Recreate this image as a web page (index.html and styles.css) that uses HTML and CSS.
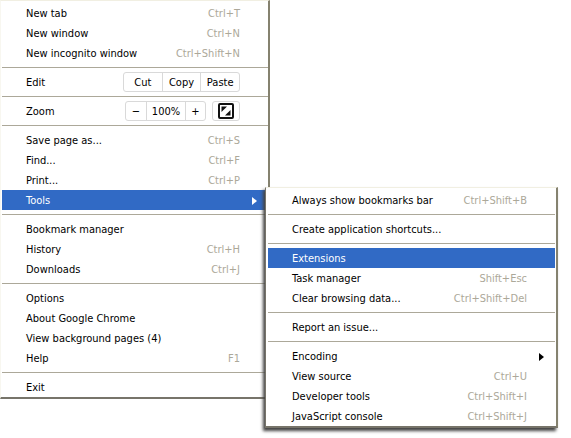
FILE: index.html
```html
<!DOCTYPE html>
<html lang="en">
<head>
<meta charset="utf-8">
<title>Chrome menu</title>
<link rel="stylesheet" href="styles.css">
</head>
<body>
<nav class="menu main-menu" aria-label="Main menu">
  <button class="item" type="button">New tab <kbd>Ctrl+T</kbd></button>
  <button class="item" type="button">New window <kbd>Ctrl+N</kbd></button>
  <button class="item" type="button">New incognito window <kbd>Ctrl+Shift+N</kbd></button>
  <hr>
  <div class="item">
    <span>Edit</span>
    <div class="group edit-group">
      <button type="button">Cut</button>
      <button type="button">Copy</button>
      <button type="button">Paste</button>
    </div>
  </div>
  <hr>
  <div class="item">
    <span>Zoom</span>
    <div class="zoom-tools">
      <div class="group zoom-group">
        <button type="button" aria-label="Zoom out">−</button>
        <output>100%</output>
        <button type="button" aria-label="Zoom in">+</button>
      </div>
      <div class="group full-group">
        <button type="button" aria-label="Full screen">
          <svg width="16" height="16" viewBox="0 0 16 16" aria-hidden="true">
            <rect x="1" y="1" width="14" height="14" rx="1" fill="#fff" stroke="#111" stroke-width="2"/>
            <path d="M3.5 3.5H9L7.300 5.200 5.200 7.300 3.500 9ZM12.500 12.500H7L8.700 10.800 10.800 8.700 12.500 7Z" fill="#111"/>
          </svg>
        </button>
      </div>
    </div>
  </div>
  <hr>
  <button class="item" type="button">Save page as... <kbd>Ctrl+S</kbd></button>
  <button class="item" type="button">Find... <kbd>Ctrl+F</kbd></button>
  <button class="item" type="button">Print... <kbd>Ctrl+P</kbd></button>
  <div class="parent">
    <button class="item selected" type="button" aria-haspopup="true" aria-expanded="true">Tools
      <svg class="arrow" width="5" height="8" viewBox="0 0 5 8" aria-hidden="true"><path d="M0 0 5 4 0 8Z" fill="currentColor"/></svg>
    </button>
    <div class="menu submenu">
      <button class="item" type="button">Always show bookmarks bar <kbd>Ctrl+Shift+B</kbd></button>
      <hr>
      <button class="item" type="button">Create application shortcuts...</button>
      <hr>
      <button class="item selected" type="button">Extensions</button>
      <button class="item" type="button">Task manager <kbd>Shift+Esc</kbd></button>
      <button class="item" type="button">Clear browsing data... <kbd>Ctrl+Shift+Del</kbd></button>
      <hr>
      <button class="item" type="button">Report an issue...</button>
      <hr>
      <button class="item" type="button" aria-haspopup="true">Encoding
        <svg class="arrow" width="5" height="8" viewBox="0 0 5 8" aria-hidden="true"><path d="M0 0 5 4 0 8Z" fill="currentColor"/></svg>
      </button>
      <button class="item" type="button">View source <kbd>Ctrl+U</kbd></button>
      <button class="item" type="button">Developer tools <kbd>Ctrl+Shift+I</kbd></button>
      <button class="item" type="button">JavaScript console <kbd>Ctrl+Shift+J</kbd></button>
    </div>
  </div>
  <hr>
  <button class="item" type="button">Bookmark manager</button>
  <button class="item" type="button">History <kbd>Ctrl+H</kbd></button>
  <button class="item" type="button">Downloads <kbd>Ctrl+J</kbd></button>
  <hr>
  <button class="item" type="button">Options</button>
  <button class="item" type="button">About Google Chrome</button>
  <button class="item" type="button">View background pages (4)</button>
  <button class="item" type="button">Help <kbd>F1</kbd></button>
  <hr>
  <button class="item" type="button">Exit</button>
</nav>
</body>
</html>
```
FILE: styles.css
```css
* {
  box-sizing: border-box;
}

body {
  min-height: 100vh;
  margin: 0;
  background: #fff;
  color: #000;
  font: 11px/18px Tahoma, "DejaVu Sans Condensed", "DejaVu Sans", sans-serif;
}

button,
kbd {
  font: inherit;
}

button {
  border: 0;
  padding: 0;
  background: none;
  color: inherit;
}

.menu {
  display: flex;
  flex-direction: column;
  background: #fff;
  border: solid;
  border-width: 1px 2px 2px 1px;
  border-color: #f1efe2 #85826f #77746a #f8f7f0;
}

.main-menu {
  width: 270px;
  padding: 2px 0 0 1px;
}

.item {
  display: flex;
  align-items: center;
  justify-content: space-between;
  width: 100%;
  height: 20px;
  padding: 2px 28px 0 24px;
  text-align: left;
  white-space: nowrap;
}

.item kbd {
  color: #aca899;
}

.selected {
  background: #316ac5;
  color: #fff;
}

.arrow {
  margin-right: -17px;
}

hr {
  width: 100%;
  height: 1px;
  margin: 4px 0;
  border: 0;
  background: #aca899;
}

.parent {
  position: relative;
}

.submenu {
  position: absolute;
  top: -3px;
  left: calc(100% - 3px);
  z-index: 1;
  width: 293px;
  padding: 2px 1px 0 2px;
  border-left-color: #77746a;
  box-shadow: -2px 3px 3px #444;
}

.group {
  display: flex;
  height: 20px;
  margin-top: -2px;
  border: 1px solid #d9d9d9;
  border-radius: 3px;
  line-height: 16px;
  text-align: center;
}

.group > * {
  padding-top: 2px;
}

.group > * + * {
  border-left: 1px solid #d9d9d9;
}

.edit-group {
  width: 117px;
}

.edit-group > * {
  flex: 1;
}

.zoom-tools {
  display: flex;
  gap: 6px;
}

.zoom-group {
  width: 81px;
}

.zoom-group button {
  width: 20px;
}

.zoom-group output {
  flex: 1;
}

.full-group {
  width: 28px;
  align-items: center;
  justify-content: center;
}

.full-group button {
  display: flex;
  padding: 0;
}
```
